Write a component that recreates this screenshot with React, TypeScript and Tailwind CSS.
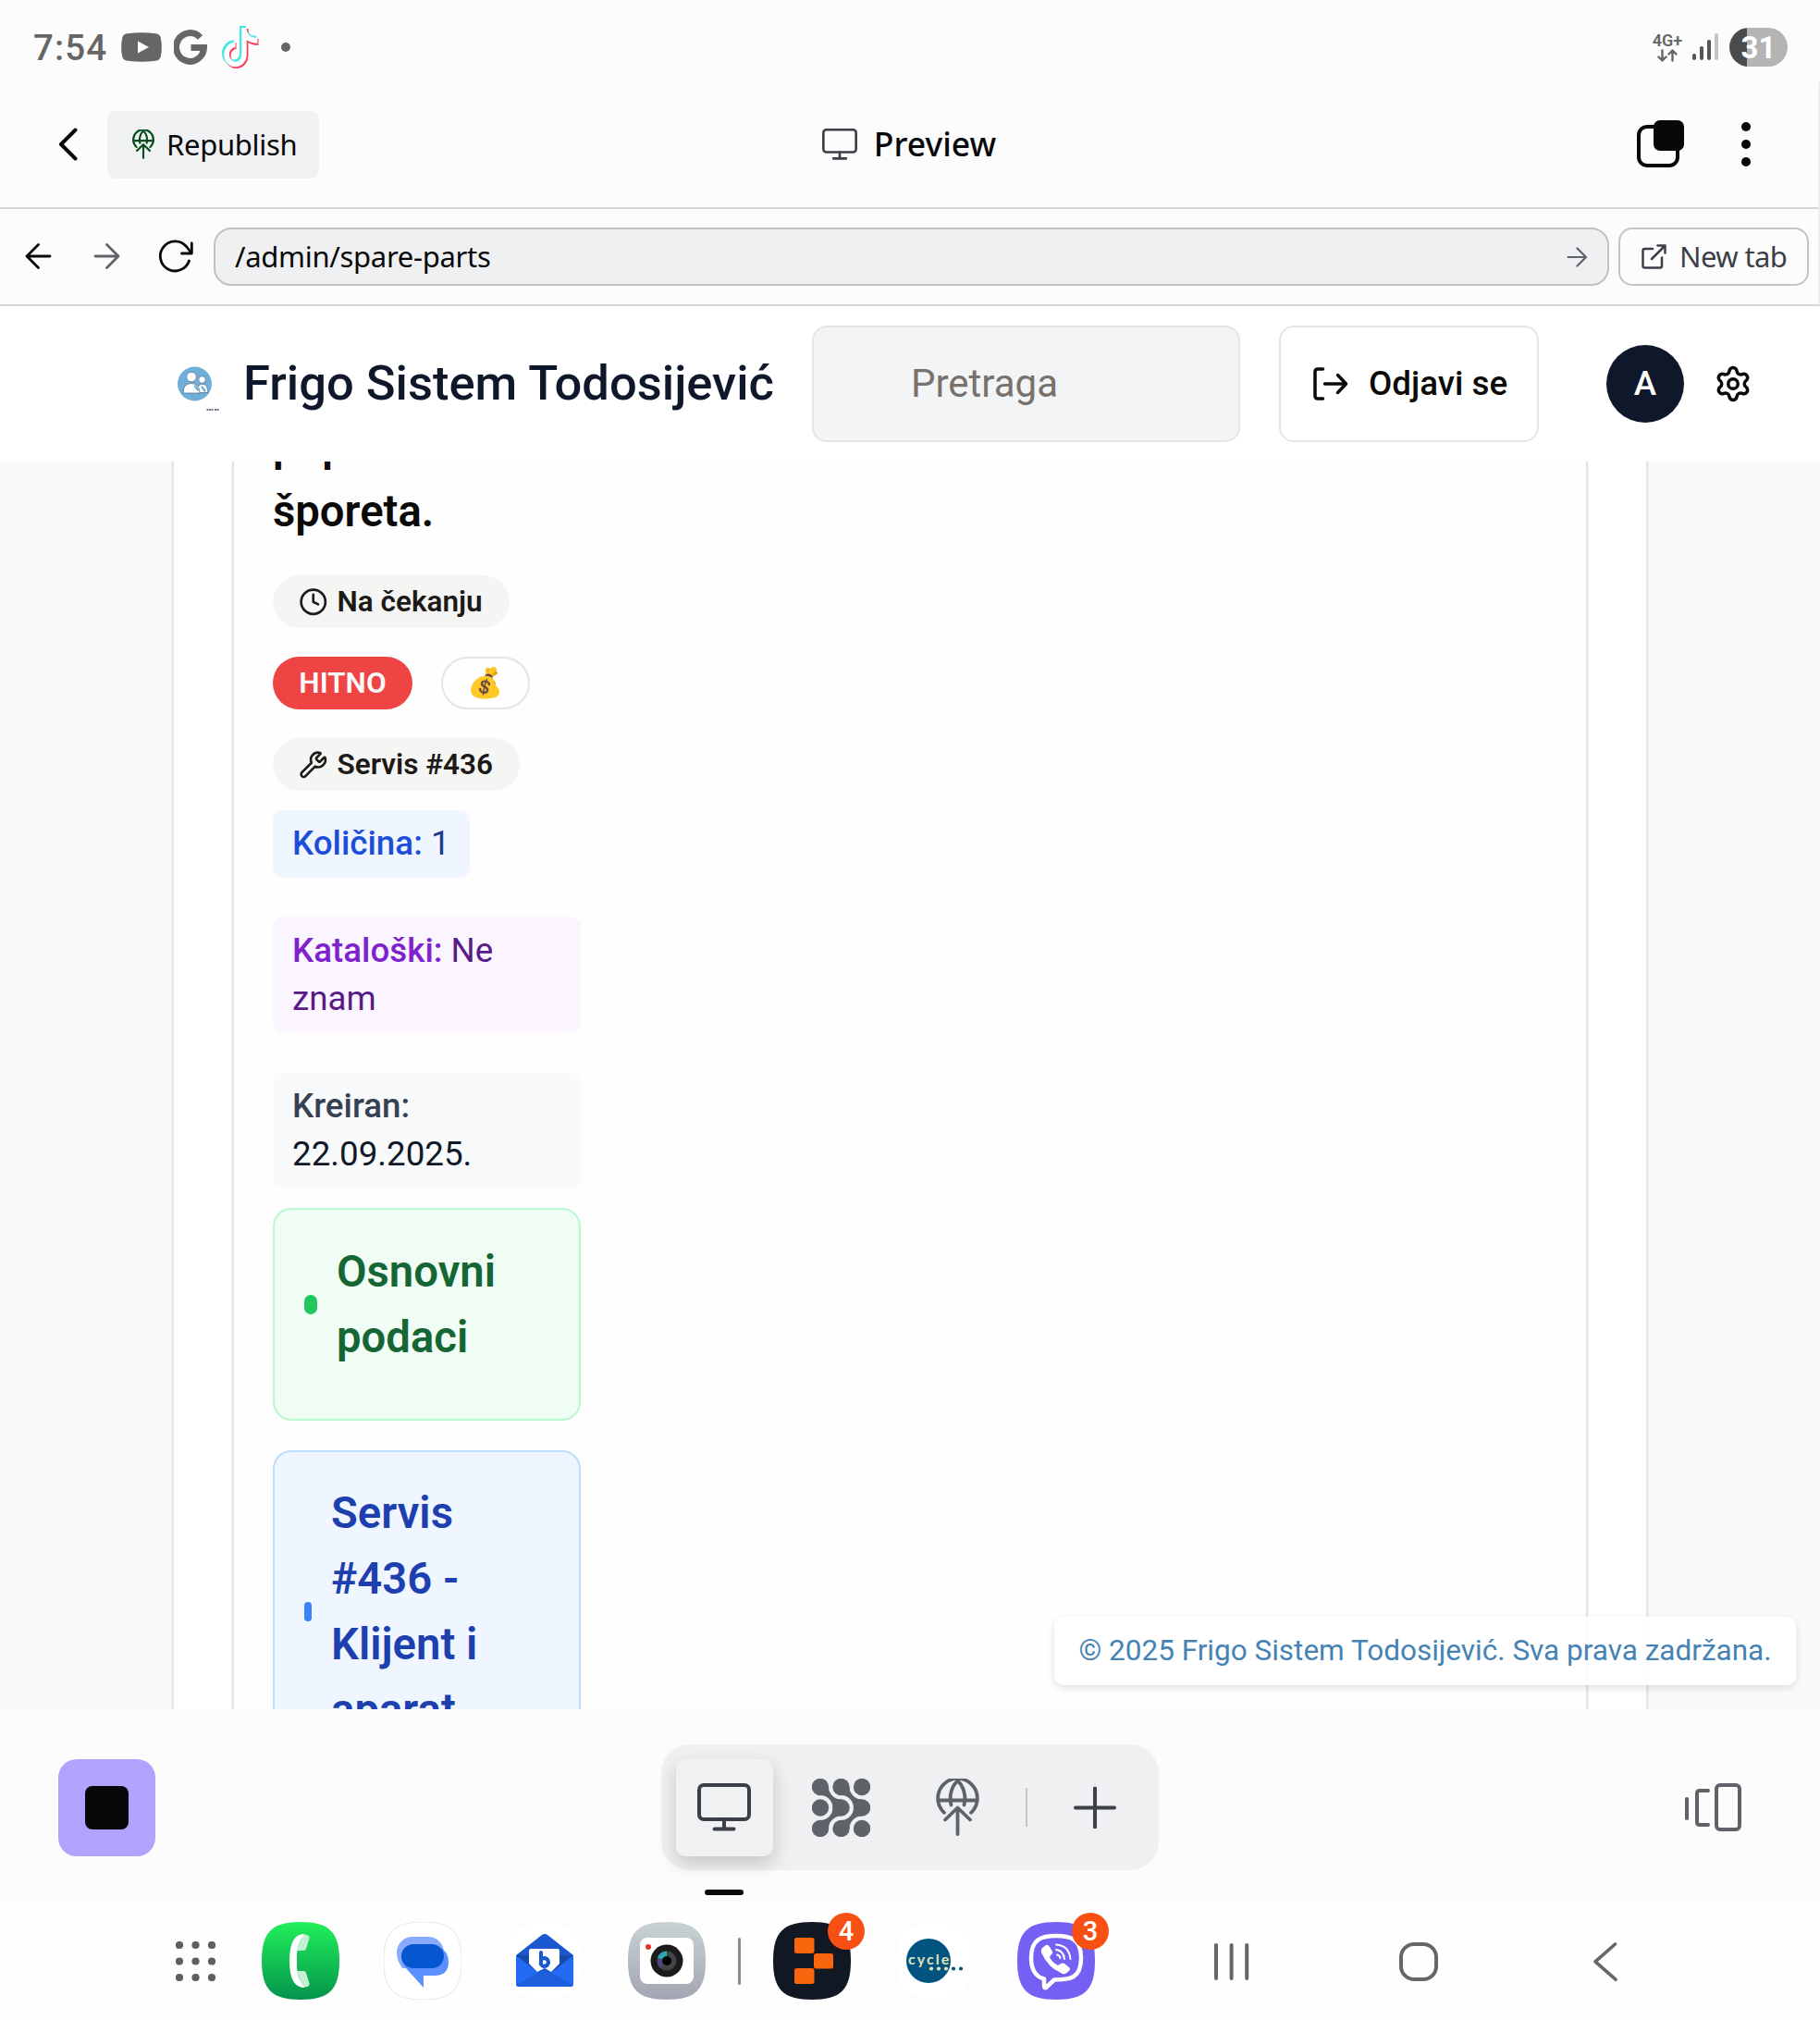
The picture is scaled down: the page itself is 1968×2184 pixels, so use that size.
import React from "react";
import { Clock, Wrench, Settings } from "lucide-react";

const squircle = "M42 0C73 0 84 11 84 42S73 84 42 84 0 73 0 42 11 0 42 0Z";

function GlobeUp({ className, stroke = 3.8 }: { className: string; stroke?: number }) {
  return (
    <svg viewBox="0 0 47 62" className={className} fill="none" stroke="currentColor" strokeWidth={stroke} strokeLinecap="round">
      <path d="M9 37A21.300 21.300 0 1 1 38 37" transform="translate(0 -.2)" />
      <path d="M2.5 23.5H44.5" />
      <path d="M23.5 2.5C17 8 14 19 16.5 28.5M23.5 2.5C30 8 33 19 30.5 28.5" />
      <path d="M23.5 32V60M10 44.5L23.5 31.5L37 44.5" strokeLinejoin="round" />
    </svg>
  );
}

function MonitorIcon({ className }: { className: string }) {
  return (
    <svg viewBox="0 0 58 52" className={className} fill="none" stroke="#3c3f47" strokeWidth="4" strokeLinecap="round">
      <rect x="2" y="2" width="54" height="37" rx="5" />
      <path d="M29 39V49M18.5 49.5H39.5" />
    </svg>
  );
}

function StatusBar() {
  return (
    <div className="flex h-[89px] shrink-0 items-start pl-9 pr-[35px] text-[#666]">
      <span className="mt-[29px] w-[95px] whitespace-nowrap text-[38.5px] font-medium leading-[45px] tracking-[1.1px]">7:54</span>
      <svg className="mt-[35px] h-8 w-11" viewBox="0 0 44 32">
        <path fill="#666" d="M7 1.2Q22-.8 37 1.2Q42.6 1.8 43 7Q44.6 16 43 25Q42.6 30.2 37 30.8Q22 32.6 7 30.8Q1.4 30.2 1 25Q-.6 16 1 7Q1.4 1.8 7 1.2Z" />
        <path fill="#fff" d="M18 9.5V22.5L30 16Z" />
      </svg>
      <svg className="ml-[13px] mt-8 h-[38px] w-9" viewBox="0 0 36 38" fill="none" stroke="#666" strokeWidth="7">
        <path d="M28.5 8.5A15 15.4 0 1 0 32.5 19.5H18.5" />
      </svg>
      <svg className="ml-4 mt-7 h-[46px] w-10" viewBox="0 0 40 46" fill="none">
        <g strokeWidth="7">
          <path stroke="#fb3a5d" d="M25 3V31A9.5 10.5 0 1 1 15.5 21.5M25 6Q27 17 39.5 17.5" />
          <path stroke="#48e5e5" d="M22.5 0V28.5A9.5 10.5 0 1 1 13 19M22.5 3Q24.5 14 37 14.5" />
          <path stroke="#fff" strokeWidth="5.5" d="M24 2V30A9.5 10.5 0 1 1 14.5 20.5M24 5Q26 15.5 38.5 16" />
        </g>
      </svg>
      <span className="ml-6 mt-[46px] size-[10px] rounded-full bg-[#666]" />
      <div className="ml-auto mt-9 flex w-8 flex-col items-center">
        <span className="whitespace-nowrap text-[18px] font-semibold leading-4">4G+</span>
        <svg className="mt-px h-[14px] w-[22px]" viewBox="0 0 22 14" fill="none" stroke="#666" strokeWidth="2.4" strokeLinecap="round" strokeLinejoin="round">
          <path d="M5.5 1.5V12.5M1.5 8.5L5.5 12.5L9.5 8.5M16.5 12.5V1.5M12.5 5.5L16.5 1.5L20.5 5.5" />
        </svg>
      </div>
      <div className="ml-[11px] mt-9 flex h-[29px] items-end gap-1">
        <span className="h-[7px] w-1 rounded-full bg-[#555]" />
        <span className="h-[15px] w-1 rounded-full bg-[#555]" />
        <span className="h-[22px] w-1 rounded-full bg-[#555]" />
        <span className="h-[29px] w-1 rounded-full bg-[#c4c4c4]" />
      </div>
      <div className="ml-3 mt-[30px] flex h-[42px] w-[63px] items-center justify-center rounded-full bg-[linear-gradient(to_right,#4b4b4b_19px,#b4b4b4_19px)] text-[33px] font-bold leading-none text-white">
        31
      </div>
    </div>
  );
}

function PreviewHeader() {
  return (
    <div className="grid h-[137px] shrink-0 grid-cols-3 items-center border-b-2 border-r-2 border-b-[#d4d5d6] border-r-[#efeff0] font-['Noto_Sans']">
      <div className="flex items-center pl-[63px]">
        <svg className="-mt-px h-9 w-[22px]" viewBox="0 0 22 36" fill="none" stroke="#07080a" strokeWidth="4" strokeLinecap="round" strokeLinejoin="round">
          <path d="M18.5 2.5L3 18L18.5 33.5" />
        </svg>
        <div className="ml-[31px] flex h-[73px] w-[229px] items-center rounded-[9px] bg-[#f0f1f3] pl-[27px]">
          <GlobeUp className="-mt-px h-8 w-6 text-[#0a4d1c]" stroke={4.2} />
          <span className="ml-[13px] whitespace-nowrap text-[31px] leading-none tracking-[-0.3px] text-[#07080a]">Republish</span>
        </div>
      </div>
      <div className="-mt-[2px] flex items-center justify-center">
        <MonitorIcon className="h-[34px] w-[38px]" />
        <span className="ml-[18px] whitespace-nowrap text-[35.5px] font-medium leading-none text-[#07080a]">Preview</span>
      </div>
      <div className="-mt-[2px] flex items-center justify-end pr-[73px]">
        <svg className="h-[51px] w-[51px]" viewBox="0 0 51 51">
          <rect x="2" y="7" width="42" height="42" rx="9" fill="none" stroke="#07080a" strokeWidth="4" />
          <rect x="18" y="0" width="33" height="33" rx="7" fill="#07080a" />
        </svg>
        <div className="ml-[62px] flex flex-col gap-[9px]">
          <span className="size-[10px] rounded-full bg-[#07080a]" />
          <span className="size-[10px] rounded-full bg-[#07080a]" />
          <span className="size-[10px] rounded-full bg-[#07080a]" />
        </div>
      </div>
    </div>
  );
}

function UrlBar() {
  return (
    <div className="flex h-[105px] shrink-0 items-center border-b-2 border-r-2 border-b-[#d4d5d6] border-r-[#efeff0] pl-[27px] pr-[10px] font-['Noto_Sans']">
      <svg className="-mt-px h-7 w-[30px]" viewBox="0 0 30 28" fill="none" stroke="#07080a" strokeWidth="2.8" strokeLinecap="round" strokeLinejoin="round">
        <path d="M14.5 1.5L2 14L14.5 26.5M2 14H27" />
      </svg>
      <svg className="-mt-px ml-11 h-7 w-[30px]" viewBox="0 0 30 28" fill="none" stroke="#5f6269" strokeWidth="2.8" strokeLinecap="round" strokeLinejoin="round">
        <path d="M14.5 1.5L27 14L14.5 26.5M2 14H27" />
      </svg>
      <svg className="-mt-[2px] ml-[39px] h-[36px] w-10" viewBox="0 0 40 36" fill="none" stroke="#07080a" strokeWidth="2.8" strokeLinecap="round" strokeLinejoin="round">
        <path d="M34.5 23A16 16 0 1 1 31.5 7.5L37 14.500M37.3 4V15H26.5" />
      </svg>
      <div className="ml-[21px] flex h-[63px] w-[1509px] items-center justify-between rounded-[19px] border-2 border-[#bfc1c4] bg-[#eff0f2] pl-[21px] pr-[21px]">
        <span className="-mt-px whitespace-nowrap text-[31px] leading-none tracking-[-0.3px] text-[#07080a]">/admin/spare-parts</span>
        <svg className="h-[22px] w-[23px]" viewBox="0 0 23 22" fill="none" stroke="#5f6269" strokeWidth="2.2" strokeLinecap="round" strokeLinejoin="round">
          <path d="M11.5 1.5L21 11L11.5 20.5M1.5 11H21" />
        </svg>
      </div>
      <div className="ml-[10px] flex h-[63px] w-[206px] items-center rounded-[15px] border-2 border-[#c2c4c6] pl-[23px]">
        <svg className="-mt-px h-[27px] w-[27px]" viewBox="0 0 27 27" fill="none" stroke="#3c3f47" strokeWidth="2.5" strokeLinecap="round" strokeLinejoin="round">
          <path d="M12 5H3.5Q1.5 5 1.5 7V23.5Q1.5 25.5 3.5 25.5H20Q22 25.5 22 23.5V14.5M17.5 1.5H25.5V9.5M25.5 1.5L11 16" />
        </svg>
        <span className="-mt-px ml-[14px] whitespace-nowrap text-[31px] leading-none tracking-[-0.6px] text-[#3c3f47]">New tab</span>
      </div>
    </div>
  );
}

function AppHeader() {
  return (
    <div className="flex h-[168px] shrink-0 items-center bg-white pl-[189px] text-[#0c0a09]">
      <svg className="h-[60px] w-[50px]" viewBox="0 -7.5 50 60">
        <circle cx="21.5" cy="22.5" r="18.5" fill="#6faed8" />
        <g fill="#fff" stroke="#5b7690" strokeWidth=".8">
          <circle cx="29.5" cy="18" r="3.8" />
          <path d="M24.5 32V26Q29.5 20 34.5 25L36 32Z" />
          <circle cx="18" cy="15" r="5.3" />
          <path d="M9 32.5Q9 22 18 22T27 32.5Z" />
        </g>
        <path d="M22 25l3 4M29.5 26l3 4" stroke="#6faed8" strokeWidth="2.5" strokeLinecap="round" />
        <path d="M34.500 50.5h7M43 50.5h5" stroke="#344256" strokeWidth="1.4" strokeDasharray="2 .6" />
      </svg>
      <h1 className="-mt-[2px] ml-6 w-[615px] whitespace-nowrap text-[52.5px] font-medium leading-none text-[#0f172a]">Frigo Sistem Todosijević</h1>
      <div className="flex h-[126px] w-[463px] items-center rounded-2xl border-2 border-[#e5e5e5] bg-[#f3f4f6] pl-[105px] text-[42px] text-[#78716c]">
        <span className="-mt-[2px]">Pretraga</span>
      </div>
      <div className="ml-[42px] flex h-[126px] w-[281px] items-center rounded-2xl border-2 border-[#e5e5e5] pl-[35px]">
        <svg className="h-9 w-[38px]" viewBox="0 0 38 36" fill="none" stroke="#0c0a09" strokeWidth="3.5" strokeLinecap="round" strokeLinejoin="round">
          <path d="M10.5 2H5Q2 2 2 5V31Q2 34 5 34H10.5M12.5 18H35M26.5 8.5L35.5 18L26.5 27.5" />
        </svg>
        <span className="ml-[22px] whitespace-nowrap text-[36.75px] font-medium">Odjavi se</span>
      </div>
      <div className="ml-[73px] flex size-[84px] items-center justify-center rounded-full bg-[#0f172a] text-[36.75px] font-medium text-white">A</div>
      <Settings className="ml-8 size-[42px]" strokeWidth={2} />
    </div>
  );
}

function Badge({ className, children }: { className: string; children: React.ReactNode }) {
  return <div className={`flex h-[57px] items-center whitespace-nowrap rounded-full text-[31.5px] font-semibold ${className}`}>{children}</div>;
}

function PartCard() {
  return (
    <div className="-mt-[52px] flex w-[333px] flex-col items-start">
      <h3 className="text-[47.25px] font-semibold leading-[71px] text-[#0c0a09]">
        <span className="block">pop</span>
        <span className="block">šporeta.</span>
      </h3>
      <Badge className="mt-[33px] w-[256px] bg-[#f5f5f4] pl-[28px] text-[#1c1917]">
        <Clock className="size-[31.5px]" strokeWidth={2} />
        <span className="ml-[10px]">Na čekanju</span>
      </Badge>
      <div className="mt-[31px] flex gap-[31px]">
        <Badge className="w-[151px] justify-center bg-[#ef4444] text-[#fafafa]">HITNO</Badge>
        <Badge className="w-[96px] justify-center border-2 border-[#e5e5e5]">💰</Badge>
      </div>
      <Badge className="mt-[31px] w-[267px] bg-[#f5f5f4] pl-[28px] text-[#1c1917]">
        <Wrench className="size-[31.5px]" strokeWidth={2} />
        <span className="ml-[10px]">Servis #436</span>
      </Badge>
      <div className="mt-[21px] flex flex-col items-start gap-[42px] self-stretch text-[36.75px] leading-[52px]">
        <div className="h-[73px] w-[213px] rounded-[10px] bg-[#eff6ff] px-[21px] pt-[10px] text-[#1e3a8a]">
          <span className="font-medium text-[#1d4ed8]">Količina:</span> 1
        </div>
        <div className="h-[126px] w-full rounded-[10px] bg-[#faf5ff] px-[21px] pt-[11px] text-[#581c87]">
          <span className="font-medium text-[#7e22ce]">Kataloški:</span> Ne znam
        </div>
        <div className="h-[126px] w-full rounded-[10px] bg-[#f9fafb] px-[21px] pt-[11px] text-[#111827]">
          <span className="font-medium text-[#374151]">Kreiran:</span> 22.09.2025.
        </div>
      </div>
      <div className="mt-[21px] flex h-[230px] w-full rounded-[20px] border-2 border-[#bbf7d0] bg-[#f0fdf4] px-8 pt-8">
        <div className="flex h-[142px] items-center">
          <span className="-mt-[2px] h-[21px] w-[14px] shrink-0 rounded-full bg-[#22c55e]" />
          <h4 className="ml-[21px] w-[220px] text-[47.25px] font-semibold leading-[71px] text-[#166534]">Osnovni podaci</h4>
        </div>
      </div>
      <div className="mt-8 flex h-[400px] w-full rounded-[20px] border-2 border-[#bfdbfe] bg-[#eff6ff] px-8 pt-[31px]">
        <div className="flex h-[284px] items-center">
          <span className="-mt-[2px] h-[21px] w-2 shrink-0 rounded-full bg-[#3b82f6]" />
          <h4 className="ml-[21px] w-[190px] text-[47.25px] font-semibold leading-[71px] text-[#1e40af]">Servis #436 - Klijent i aparat</h4>
        </div>
      </div>
    </div>
  );
}

function Content() {
  return (
    <div className="relative h-[1349px] shrink-0 overflow-hidden bg-[#f8fafc]">
      <div className="ml-[186px] flex h-[1900px] w-[1596px] border-x-2 border-[#e5e5e5] bg-white px-[63px] shadow-sm">
        <div className="w-full border-x-2 border-[#e5e5e5] bg-[#fefefe] pl-[42px] shadow-sm">
          <PartCard />
        </div>
      </div>
      <div className="absolute bottom-[26px] right-[26px] flex h-[74px] w-[802px] items-center justify-center whitespace-nowrap rounded-[10px] bg-white/90 text-[31.5px] text-[#4682b4] shadow-[0_3px_8px_rgba(0,0,0,0.12)]">
        © 2025 Frigo Sistem Todosijević. Sva prava zadržana.
      </div>
    </div>
  );
}

function PatternIcon() {
  const link = "M9 9H18A13.5 13.5 0 0 0 31.5 22.5V31.5H22.5A13.5 13.5 0 0 0 9 18Z";
  return (
    <svg className="ml-[42px] size-[63px]" viewBox="0 0 63 63" fill="#5f6269">
      {[9, 31.5, 54].map((x) => [9, 31.5, 54].map((y) => <circle key={`${x}-${y}`} cx={x} cy={y} r="9.2" />))}
      <path d={link} />
      <path d={link} transform="translate(22.5 0)" />
      <path d={link} transform="translate(0 63) scale(1 -1)" />
      <path d={link} transform="translate(22.5 63) scale(1 -1)" />
    </svg>
  );
}

function WorkspaceBar() {
  return (
    <div className="grid h-[210px] shrink-0 grid-cols-3 bg-[#fcfcfd]">
      <div className="ml-[63px] mt-[54px] flex size-[105px] items-center justify-center rounded-[20px] bg-[#b2a3ff]">
        <span className="size-[47px] rounded-[8px] bg-[#07080a]" />
      </div>
      <div className="mt-[38px] flex flex-col items-center">
        <div className="flex h-[136px] w-[538px] items-center rounded-[31px] bg-[#eff0f2] pl-4">
          <div className="flex size-[105px] items-center justify-center rounded-[10px] bg-[#f0f1f3] pr-px shadow-[0_8px_20px_rgba(0,0,0,0.18)]">
            <MonitorIcon className="h-[52px] w-[58px]" />
          </div>
          <PatternIcon />
          <GlobeUp className="ml-[71px] h-[62px] w-[47px] text-[#5f6269]" />
          <span className="ml-[50px] h-[42px] w-[2px] bg-[#c3c5c8]" />
          <svg className="ml-[50px] size-[46px]" viewBox="0 0 46 46" stroke="#3c3f47" strokeWidth="4" strokeLinecap="round">
            <path d="M23 2.500V44.500M2 23.500H44" />
          </svg>
        </div>
        <span className="mr-[402px] mt-[21px] h-[6px] w-[42px] rounded-full bg-[#07080a]" />
      </div>
      <svg className="ml-auto mr-[85px] mt-[80px] h-[52px] w-[61px]" viewBox="0 0 61 52" fill="none" stroke="#5f6269" strokeWidth="4" strokeLinecap="round">
        <path d="M2 17V38M25 8H16Q13 8 13 11V42Q13 45 16 45H25" />
        <rect x="34" y="2" width="25" height="48" rx="4" />
      </svg>
    </div>
  );
}

function CountBadge({ count }: { count: number }) {
  return (
    <span className="absolute -right-[15px] -top-[10px] flex size-10 items-center justify-center rounded-full bg-[#f84f14] text-[29px] font-medium leading-none text-white">{count}</span>
  );
}

function SystemDock() {
  return (
    <div className="flex h-[126px] shrink-0 items-start bg-[#fefefe] pl-[190px] pt-5">
      <svg className="mt-[21px] h-[43px] w-[43px]" viewBox="0 0 43 43" fill="#5f5f5f">
        {[4, 21.5, 39].map((x) => [4, 21.5, 39].map((y) => <circle key={`${x}-${y}`} cx={x} cy={y} r="4.1" />))}
      </svg>
      <svg className="ml-[50px] size-[84px]" viewBox="0 0 84 84">
        <defs>
          <linearGradient id="call" x1="0" y1="0" x2="0" y2="1">
            <stop offset="0" stopColor="#22f05a" />
            <stop offset="1" stopColor="#04934c" />
          </linearGradient>
        </defs>
        <path d={squircle} fill="url(#call)" />
        <path d="M44 13L49 14Q52 15 51.5 18L48 29Q47.5 31 45 31L38 31ZM44 71L49 70Q52 69 51.5 66L48 55Q47.5 53 45 53L38 53Z" fill="#c3efd2" />
        <path d="M46 13Q30 13 30 42T46 71Q39 62 38 50V34Q39 22 46 13Z" fill="#fff" />
      </svg>
      <svg className="ml-12 size-[84px]" viewBox="0 0 84 84">
        <path d={squircle} fill="#fff" stroke="#e8e8e8" strokeWidth="1" />
        <path d="M31 16H48A17 17 0 0 1 48 50H20Q14 42 14 33A17 17 0 0 1 31 16Z" fill="#89abff" />
        <path d="M19 33L60 27Q70 32 70 43Q70 58 55 58H43V71L23 49Q18 43 19 33Z" fill="#5a90ff" />
        <rect x="19" y="24" width="46" height="26" rx="13" fill="#0556cf" />
      </svg>
      <svg className="ml-12 size-[84px]" viewBox="0 0 84 84">
        <path d={squircle} fill="#fff" stroke="#fafafa" />
        <path d="M11 36L39 14Q42 12 45 14L73 36V67Q73 70 70 70H14Q11 70 11 67Z" fill="#1a58d0" />
        <path d="M11 36L35 55L11 69ZM73 36L49 55L73 69Z" fill="#206bf2" />
        <path d="M11 36H73L42 60Z" fill="#174aae" />
        <path d="M25 31Q25 29 27 29H56Q58 29 58 31V45L49 54L42 50L34 54L25 45Z" fill="#fff" />
        <path d="M12 69L38 53Q42 50 46 53L72 69Q71 70 69 70H15Q13 70 12 69Z" fill="#1d5edb" />
        <path d="M38 33V46M38 41Q39 39 42 39Q46 40 46 44Q45 48 41 48Q37 47 38 42" fill="none" stroke="#1b5ad2" strokeWidth="4" strokeLinecap="round" />
      </svg>
      <svg className="ml-12 size-[84px]" viewBox="0 0 84 84">
        <defs>
          <linearGradient id="cam" x1="0" y1="0" x2="0" y2="1">
            <stop offset="0" stopColor="#c8d2d3" />
            <stop offset="1" stopColor="#a2a5b2" />
          </linearGradient>
        </defs>
        <path d={squircle} fill="url(#cam)" />
        <rect x="13" y="17" width="58" height="50" rx="8" fill="#fff" />
        <circle cx="22" cy="27" r="3" fill="#e53434" />
        <circle cx="42" cy="42" r="17.5" fill="#1b1b1c" />
        <circle cx="42" cy="42" r="10.5" fill="#444347" />
        <path d="M42 42V31.5A10.5 10.5 0 0 0 32 39Z" fill="#29a7b5" />
        <path d="M42 42L32 39A10.5 10.5 0 0 0 35 50Z" fill="#51447c" />
        <circle cx="42" cy="42" r="5" fill="#000" />
      </svg>
      <span className="ml-[35px] mt-[17px] h-[51px] w-[3px] rounded-full bg-[#8b8b8b]" />
      <div className="relative ml-[35px]">
        <svg className="size-[84px]" viewBox="0 0 84 84">
          <path d={squircle} fill="#121724" />
          <g fill="#f8660e">
            <rect x="23" y="17" width="21.5" height="17" rx="2.5" />
            <rect x="44" y="34" width="21" height="16.5" rx="2.5" />
            <rect x="23" y="50" width="21.5" height="17" rx="2.5" />
          </g>
        </svg>
        <CountBadge count={4} />
      </div>
      <svg className="ml-12 size-[84px]" viewBox="0 0 84 84">
        <path d={squircle} fill="#fff" stroke="#fafafa" />
        <circle cx="36" cy="42" r="24" fill="#00547f" />
        <text x="14" y="45.5" fontSize="16" fontFamily="Lato" fontWeight="700" letterSpacing="1.7" fill="#e3e3ba" textLength="46">cycle</text>
        <circle cx="39" cy="50.5" r="2.1" fill="#e3e3ba" />
        <circle cx="47" cy="50.5" r="2.1" fill="#e3e3ba" />
        <circle cx="55" cy="50.5" r="2.1" fill="#e3e3ba" />
        <circle cx="63" cy="50.5" r="2.1" fill="#00547f" />
        <circle cx="71" cy="50.5" r="2.1" fill="#00547f" />
      </svg>
      <div className="relative ml-12">
        <svg className="size-[84px]" viewBox="0 0 84 84">
          <path d={squircle} fill="#7460f2" />
          <path d="M42 15Q55 15 61 19Q69 24 69 39Q69 54 61 59Q55 62.5 40 62.5L31 71Q29 72 29 69V61.5Q23 60 20 56Q15 50 15 39Q15 24 23 19Q29 15 42 15Z" fill="none" stroke="#fff" strokeWidth="4.5" strokeLinejoin="round" />
          <path d="M27 28L31 25Q33 24 35 27L38 32Q39 34 36 36L35 38Q37 43 44 47L47 45Q49 44 51 45L56 49Q58 51 56 53L52 56Q50 57 47 55Q33 49 26 33Q25 30 27 28Z" fill="#fff" />
          <path d="M42 30Q50 31 51 40M42 24.5Q56 25.5 57.5 40M43 35.5Q46 36 46.5 39" fill="none" stroke="#fff" strokeWidth="2" strokeLinecap="round" />
        </svg>
        <CountBadge count={3} />
      </div>
      <svg className="ml-[128px] mt-[22px] h-[42px] w-[40px]" viewBox="0 0 40 42" stroke="#666" strokeWidth="4" strokeLinecap="round">
        <path d="M3 3V39M19.600 3V39M36.200 3V39" />
      </svg>
      <span className="ml-[161px] mt-[22px] size-[42px] rounded-[16px] border-4 border-[#666]" />
      <svg className="ml-[168px] mt-[22px] h-[42px] w-[26px]" viewBox="0 0 26 42" fill="none" stroke="#666" strokeWidth="3.6" strokeLinecap="round" strokeLinejoin="round">
        <path d="M23.500 2L2 20.800L24 40.200" />
      </svg>
    </div>
  );
}

export default function App() {
  return (
    <div className="flex h-[2184px] w-[1968px] flex-col overflow-hidden bg-[#fcfcfd] font-[Roboto,'Noto_Color_Emoji',sans-serif]">
      <StatusBar />
      <PreviewHeader />
      <UrlBar />
      <AppHeader />
      <Content />
      <WorkspaceBar />
      <SystemDock />
    </div>
  );
}
